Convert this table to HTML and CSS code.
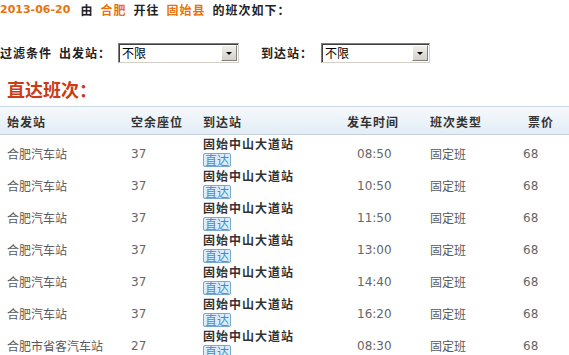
FILE: index.html
```html
<!DOCTYPE html>
<html lang="zh-CN">
<head>
<meta charset="utf-8">
<title>班次查询</title>
<link rel="stylesheet" href="styles.css">
</head>
<body>
<div class="topline">
  <span class="date">2013-06-20</span>
  <span class="word">由</span>
  <span class="city">合肥</span>
  <span class="word">开往</span>
  <span class="city">固始县</span>
  <span class="word">的班次如下：</span>
</div>

<div class="filter">
  <span class="flabel">过滤条件</span>
  <span class="flabel second">出发站：</span>
  <div class="fselect wide"><span class="fval">不限</span><span class="fbtn"><i class="arrow"></i></span></div>
  <span class="flabel third">到达站：</span>
  <div class="fselect narrow"><span class="fval">不限</span><span class="fbtn"><i class="arrow"></i></span></div>
</div>

<h2 class="title">直达班次：</h2>

<div class="table">
  <div class="thead">
    <div class="th">始发站</div>
    <div class="th">空余座位</div>
    <div class="th">到达站</div>
    <div class="th">发车时间</div>
    <div class="th">班次类型</div>
    <div class="th price-h">票价</div>
  </div>

  <div class="tr">
    <div class="td">合肥汽车站</div>
    <div class="td num">37</div>
    <div class="td dest"><b>固始中山大道站</b><span class="badge">直达</span></div>
    <div class="td num time">08:50</div>
    <div class="td">固定班</div>
    <div class="td num">68</div>
  </div>
  <div class="tr">
    <div class="td">合肥汽车站</div>
    <div class="td num">37</div>
    <div class="td dest"><b>固始中山大道站</b><span class="badge">直达</span></div>
    <div class="td num time">10:50</div>
    <div class="td">固定班</div>
    <div class="td num">68</div>
  </div>
  <div class="tr">
    <div class="td">合肥汽车站</div>
    <div class="td num">37</div>
    <div class="td dest"><b>固始中山大道站</b><span class="badge">直达</span></div>
    <div class="td num time">11:50</div>
    <div class="td">固定班</div>
    <div class="td num">68</div>
  </div>
  <div class="tr">
    <div class="td">合肥汽车站</div>
    <div class="td num">37</div>
    <div class="td dest"><b>固始中山大道站</b><span class="badge">直达</span></div>
    <div class="td num time">13:00</div>
    <div class="td">固定班</div>
    <div class="td num">68</div>
  </div>
  <div class="tr">
    <div class="td">合肥汽车站</div>
    <div class="td num">37</div>
    <div class="td dest"><b>固始中山大道站</b><span class="badge">直达</span></div>
    <div class="td num time">14:40</div>
    <div class="td">固定班</div>
    <div class="td num">68</div>
  </div>
  <div class="tr">
    <div class="td">合肥汽车站</div>
    <div class="td num">37</div>
    <div class="td dest"><b>固始中山大道站</b><span class="badge">直达</span></div>
    <div class="td num time">16:20</div>
    <div class="td">固定班</div>
    <div class="td num">68</div>
  </div>
  <div class="tr">
    <div class="td">合肥市省客汽车站</div>
    <div class="td num">27</div>
    <div class="td dest"><b>固始中山大道站</b><span class="badge">直达</span></div>
    <div class="td num time">08:30</div>
    <div class="td">固定班</div>
    <div class="td num">68</div>
  </div>
</div>
</body>
</html>
```

FILE: styles.css
```css
html, body {
  margin: 0;
  padding: 0;
  background: #fff;
  overflow: hidden;
}
body {
  font-family: "DejaVu Sans", "Noto Sans CJK SC", sans-serif;
  font-size: 12px;
  color: #333;
}

/* first line */
.topline {
  height: 20px;
  line-height: 20px;
  font-weight: bold;
  white-space: nowrap;
  display: flex;
  align-items: center;
}
.topline .date {
  font-family: "DejaVu Sans", sans-serif;
  font-size: 11px;
  color: #e8730e;
  margin-right: 10px;
}
.topline .word {
  font-family: "Noto Sans CJK SC", sans-serif;
  color: #222;
  letter-spacing: 1px;
  margin-right: 7px;
}
.topline .city {
  font-family: "Noto Sans CJK SC", sans-serif;
  color: #e8730e;
  letter-spacing: 1px;
  margin-right: 7px;
}

/* filter line */
.filter {
  margin-top: 23px;
  height: 20px;
  display: flex;
  align-items: center;
  white-space: nowrap;
}
.flabel {
  font-family: "Noto Sans CJK SC", sans-serif;
  font-weight: bold;
  color: #222;
  letter-spacing: 1px;
  line-height: 20px;
}
.flabel.second { margin-left: 7px; margin-right: 7px; }
.flabel.third { margin-left: 22px; margin-right: 8px; }

.fselect {
  box-sizing: border-box;
  height: 20px;
  display: flex;
  align-items: center;
  border: 1px solid #7f7f7f;
  border-right-color: #d4d0c8;
  border-bottom-color: #d4d0c8;
  box-shadow: inset 1px 1px 0 #404040;
  background: #fff;
  padding: 1px 1px 1px 3px;
}
.fselect.wide { width: 121px; }
.fselect.narrow { width: 109px; }
.fval {
  flex: 1;
  font-family: "Noto Sans CJK SC", sans-serif;
  font-size: 12px;
  line-height: 16px;
  color: #000;
}
.fbtn {
  box-sizing: border-box;
  width: 16px;
  height: 16px;
  background: linear-gradient(#f0efea, #d4d0c8);
  border: 1px solid;
  border-color: #fff #808080 #808080 #fff;
  display: flex;
  align-items: center;
  justify-content: center;
}
.arrow {
  width: 0;
  height: 0;
  border-left: 3px solid transparent;
  border-right: 3px solid transparent;
  border-top: 3px solid #000;
  margin-top: 1px;
}

/* title */
.title {
  margin: 14px 0 0 7px;
  height: 24px;
  font-family: "Noto Sans CJK SC", sans-serif;
  font-size: 18px;
  line-height: 24px;
  font-weight: bold;
  color: #cc3a18;
  letter-spacing: 0;
}

/* table */
.table {
  margin-top: 5px;
}
.thead, .tr {
  display: grid;
  grid-template-columns: 124px 72px 144px 83px 93px 1fr;
  padding-left: 7px;
}
.thead {
  height: 27px;
  border-top: 1px solid #cbd7e3;
  border-bottom: 1px solid #c6d2de;
  background: linear-gradient(#f6f9fc, #e3edf6);
  align-items: center;
}
.th {
  font-family: "Noto Sans CJK SC", sans-serif;
  font-weight: bold;
  color: #333;
  letter-spacing: 1px;
  line-height: 16px;
  padding-top: 3px;
}
.th.price-h { padding-left: 5px; }

.tr {
  height: 32px;
  align-items: center;
}
.td {
  font-family: "Noto Sans CJK SC", sans-serif;
  color: #5a5a5a;
  line-height: 16px;
  padding-top: 5px;
  white-space: nowrap;
}
.td.num {
  font-family: "DejaVu Sans", sans-serif;
  color: #666;
}
.td.time { padding-left: 10px; }
.td.dest {
  padding-top: 0;
  align-self: start;
  margin-top: 1px;
  display: flex;
  flex-direction: column;
  align-items: flex-start;
}
.td.dest b {
  font-weight: bold;
  color: #333;
  letter-spacing: 1px;
  line-height: 15px;
}
.badge {
  box-sizing: border-box;
  margin-top: 2px;
  height: 14px;
  line-height: 12px;
  font-size: 12px;
  padding: 0 1px;
  color: #3a8bc8;
  background: #dcedf9;
  border: 1px solid #76a9d2;
  border-radius: 2px;
}
```
